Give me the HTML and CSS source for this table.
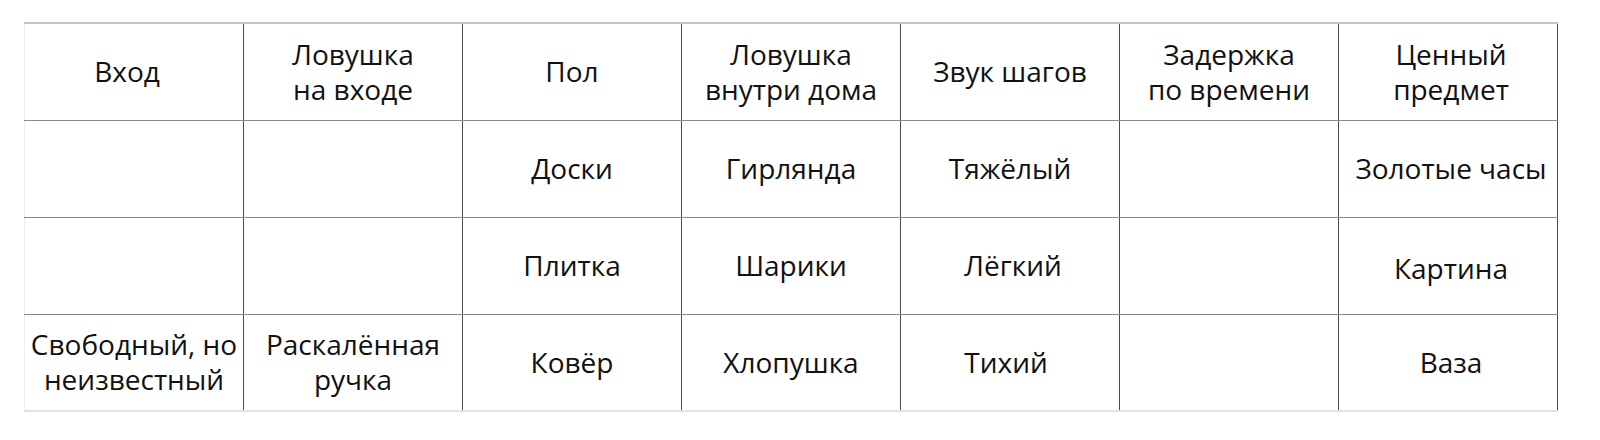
FILE: index.html
```html
<!DOCTYPE html>
<html lang="ru">
<head>
<meta charset="utf-8">
<link rel="stylesheet" href="styles.css">
</head>
<body>
<table class="grid">
  <tr>
    <td class="nudge-left-2">Вход</td>
    <td>Ловушка<br>на входе</td>
    <td>Пол</td>
    <td>Ловушка<br>внутри дома</td>
    <td>Звук шагов</td>
    <td>Задержка<br>по времени</td>
    <td class="nudge-right">Ценный<br>предмет</td>
  </tr>
  <tr>
    <td></td>
    <td></td>
    <td>Доски</td>
    <td>Гирлянда</td>
    <td>Тяжёлый</td>
    <td></td>
    <td class="nudge-right">Золотые часы</td>
  </tr>
  <tr>
    <td></td>
    <td></td>
    <td>Плитка</td>
    <td>Шарики</td>
    <td class="nudge-right">Лёгкий</td>
    <td></td>
    <td class="nudge-right nudge-down">Картина</td>
  </tr>
  <tr class="last">
    <td>Свободный, но<br>неизвестный</td>
    <td>Раскалённая<br>ручка</td>
    <td>Ковёр</td>
    <td>Хлопушка</td>
    <td class="nudge-left">Тихий</td>
    <td></td>
    <td class="nudge-right">Ваза</td>
  </tr>
</table>
</body>
</html>
```

FILE: styles.css
```css
html, body {
  margin: 0;
  padding: 0;
  background: #ffffff;
}
body {
  font-family: "Open Sans", "Noto Sans", sans-serif;
  color: #111111;
}
.grid {
  margin: 22px 0 0 24px;
  border-collapse: collapse;
  table-layout: fixed;
  width: 1533px;
  border-top: 2px solid #c4c4c4;
  border-left: 1px solid #eeeeee;
}
.grid td {
  width: 219px;
  height: 97px;
  box-sizing: border-box;
  padding: 0 2px;
  text-align: center;
  vertical-align: middle;
  font-size: 28px;
  line-height: 35px;
  border-right: 1px solid #4a4a4a;
  border-bottom: 1px solid #8a8a8a;
}
.grid td:first-child {
  border-left: 1px solid #eeeeee;
}
.grid .last td {
  border-bottom: 2px solid #e2e2e2;
}
.grid td.nudge-left-2 {
  padding-right: 16px;
}
.grid td.nudge-left {
  padding-right: 10px;
}
.grid td.nudge-right {
  padding-left: 8px;
}
.grid td.nudge-down {
  padding-top: 6px;
}
```
